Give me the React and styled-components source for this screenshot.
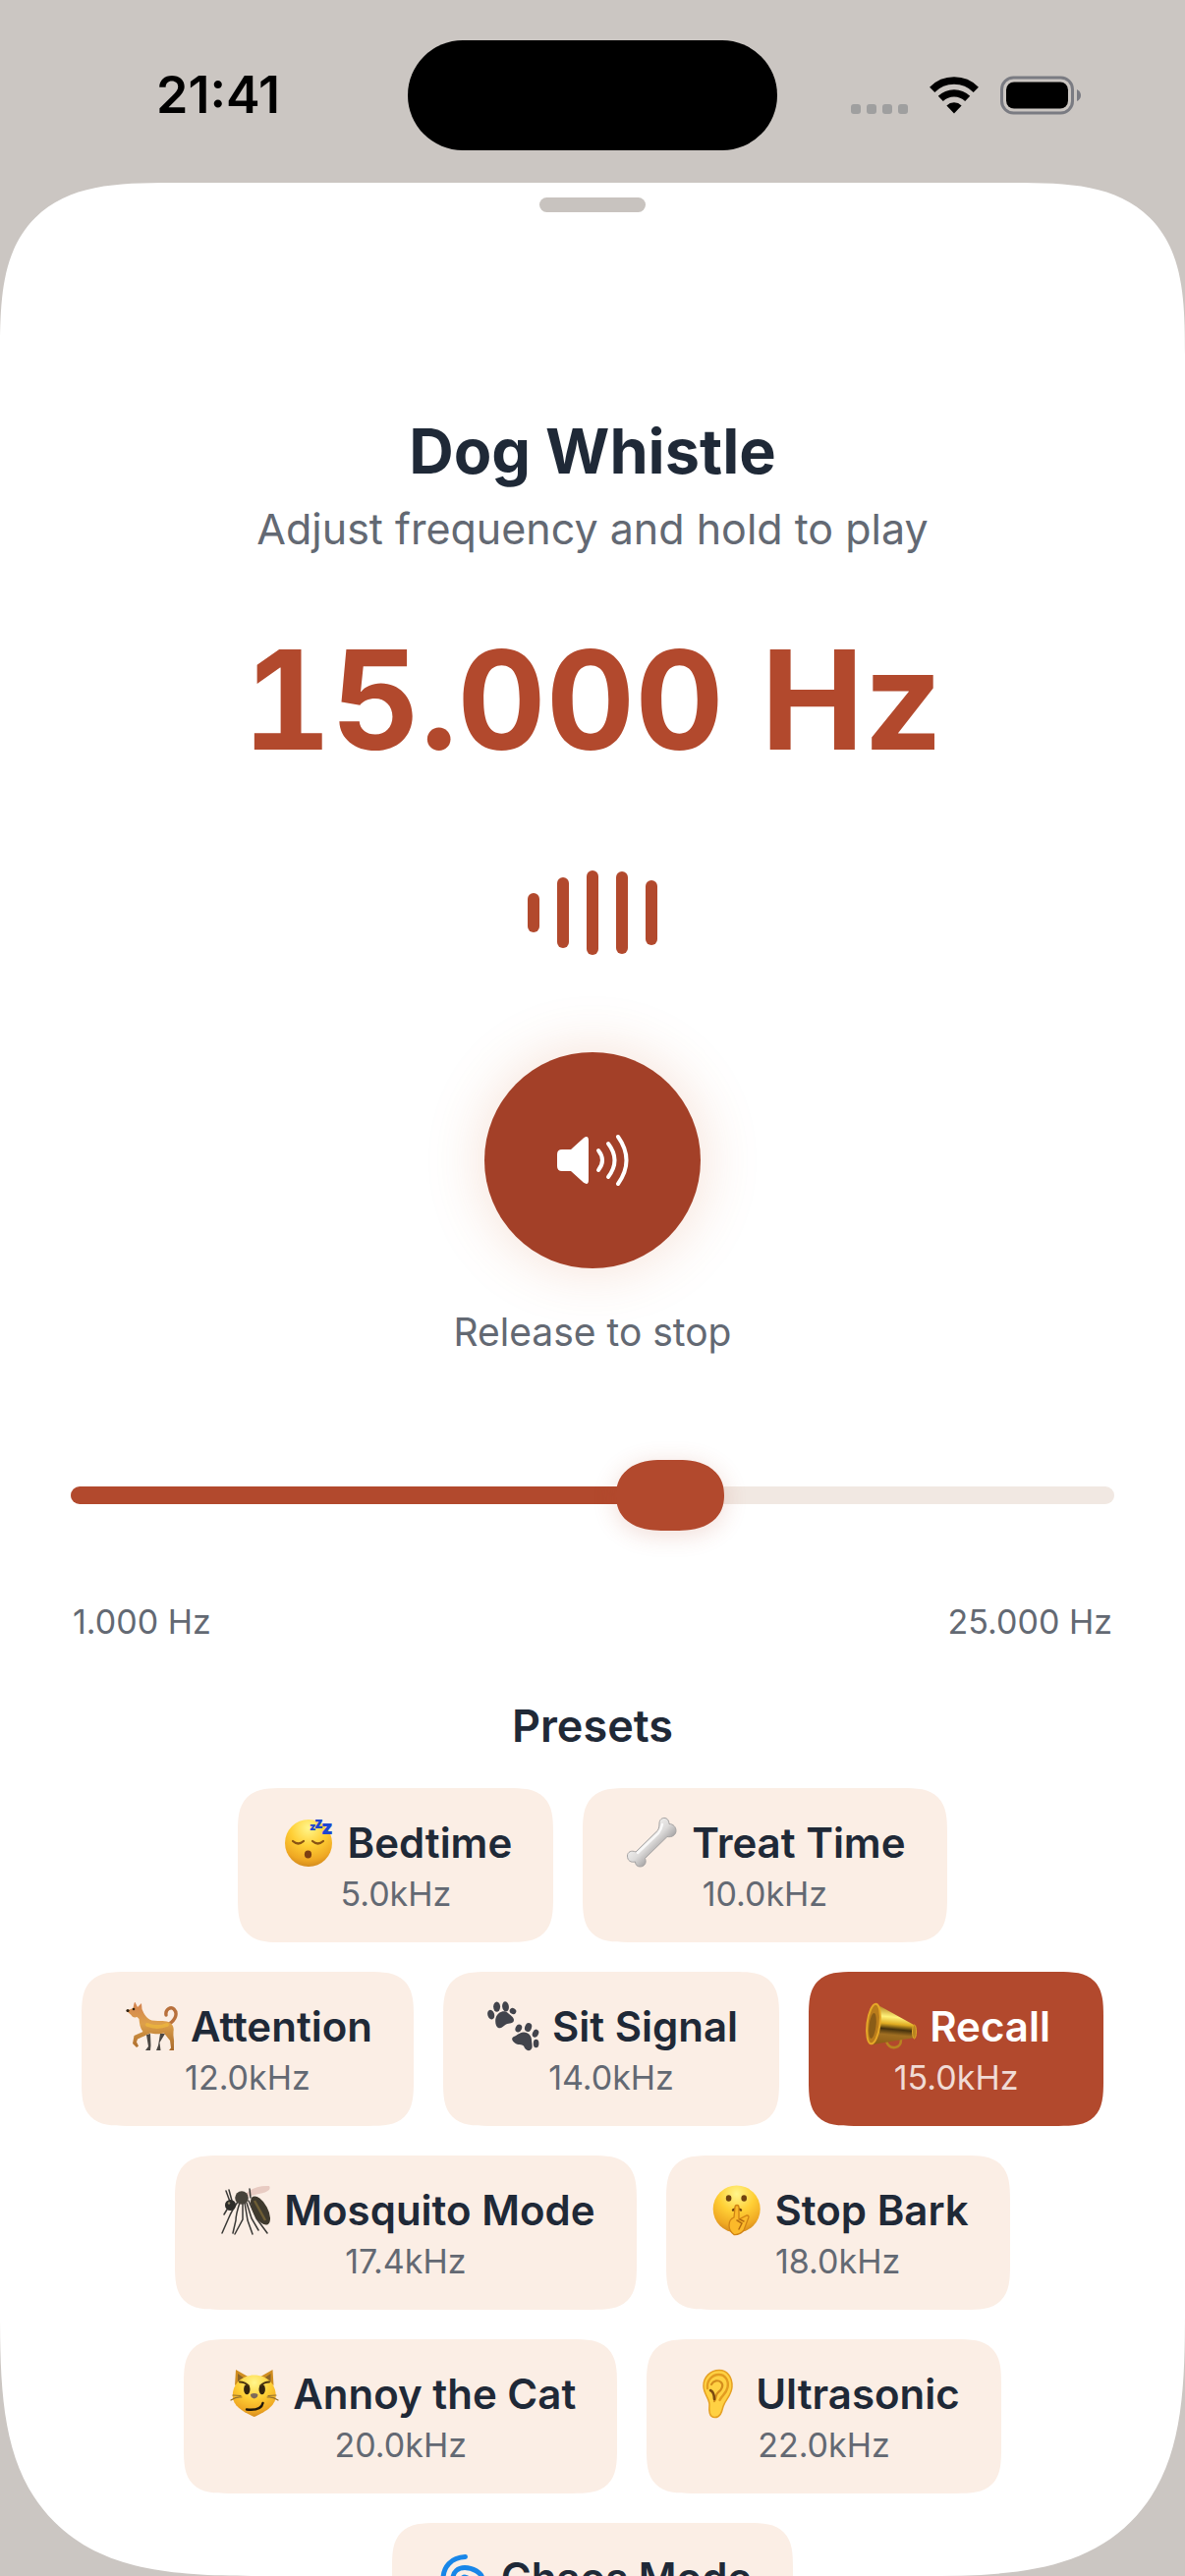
import React, { useState } from 'react';
import styled, { createGlobalStyle } from 'styled-components';

const PRESETS = [
  { name: 'Bedtime', hz: 5000, icon: SleepingIcon },
  { name: 'Treat Time', hz: 10000, icon: BoneIcon },
  { name: 'Attention', hz: 12000, icon: DogIcon },
  { name: 'Sit Signal', hz: 14000, icon: PawsIcon },
  { name: 'Recall', hz: 15000, icon: MegaphoneIcon },
  { name: 'Mosquito Mode', hz: 17400, icon: MosquitoIcon },
  { name: 'Stop Bark', hz: 18000, icon: ShushIcon },
  { name: 'Annoy the Cat', hz: 20000, icon: CatIcon },
  { name: 'Ultrasonic', hz: 22000, icon: EarIcon },
  { name: 'Chaos Mode', hz: 25000, icon: CycloneIcon },
];

const MIN_HZ = 1000;
const MAX_HZ = 25000;
const WAVE = [40, 72, 86, 84, 66];

const formatHz = (hz) => `${Math.floor(hz / 1000)}.${String(hz % 1000).padStart(3, '0')} Hz`;

function App() {
  const [hz, setHz] = useState(15000);
  const fill = ((hz - MIN_HZ) / (MAX_HZ - MIN_HZ)) * 100;

  return (
    <Screen>
      <GlobalStyle />
      <StatusBar>
        <Clock>21:41</Clock>
        <Island />
        <StatusIcons />
      </StatusBar>
      <Sheet>
        <Handle />
        <Title>Dog Whistle</Title>
        <Subtitle>Adjust frequency and hold to play</Subtitle>
        <Frequency>{formatHz(hz)}</Frequency>
        <Wave>
          {WAVE.map((height, i) => (
            <WaveBar key={i} style={{ height }} />
          ))}
        </Wave>
        <PlayButton type="button" aria-label="Play">
          <SpeakerIcon />
        </PlayButton>
        <Hint>Release to stop</Hint>
        <Slider
          type="range"
          aria-label="Frequency"
          min={MIN_HZ}
          max={MAX_HZ}
          step={100}
          value={hz}
          onChange={(e) => setHz(Number(e.target.value))}
          style={{ '--fill': `${fill}%` }}
        />
        <Range>
          <span>{formatHz(MIN_HZ)}</span>
          <span>{formatHz(MAX_HZ)}</span>
        </Range>
        <PresetsTitle>Presets</PresetsTitle>
        <PresetList>
          {PRESETS.map(({ name, hz: value, icon: Icon }) => (
            <Preset key={name} type="button" $active={value === hz} onClick={() => setHz(value)}>
              <PresetName>
                <Icon />
                {name}
              </PresetName>
              <PresetHz $active={value === hz}>{(value / 1000).toFixed(1)}kHz</PresetHz>
            </Preset>
          ))}
        </PresetList>
      </Sheet>
    </Screen>
  );
}

export default App;

function StatusIcons() {
  return (
    <StatusGroup>
      <svg width="58" height="38" viewBox="0 0 58 38" fill="#9f9f9f">
        <rect x="0" y="28" width="10" height="10" rx="3" />
        <rect x="16" y="28" width="10" height="10" rx="3" />
        <rect x="32" y="28" width="10" height="10" rx="3" />
        <rect x="48" y="28" width="10" height="10" rx="3" />
      </svg>
      <svg width="50" height="38" viewBox="0 0 50 38">
        <path d="M2.7 13.3a31.5 31.5 0 0 1 44.6 0" fill="none" stroke="#000" strokeWidth="7.4" />
        <path d="M11.3 22.4a19.5 19.5 0 0 1 27.4 0" fill="none" stroke="#000" strokeWidth="7.2" />
        <path d="M17.4 29.4a11 11 0 0 1 15.2 0L25 37.5z" />
      </svg>
      <svg width="82" height="40" viewBox="0 0 82 40">
        <rect x="1.5" y="2" width="72" height="36" rx="12" fill="none" stroke="#7a7b82" strokeWidth="3" />
        <rect x="6" y="6.5" width="63" height="27" rx="8" />
        <path d="M78 14q4 2 4 6t-4 6z" fill="#7a7b82" />
      </svg>
    </StatusGroup>
  );
}

function SpeakerIcon() {
  return (
    <svg width="74" height="54" viewBox="0 0 74 54" aria-hidden="true">
      <path
        d="M6 16h9L28 4.200Q33 1 33 7v40q0 6-5 2.800L15 38H6q-5 0-5-5V21q0-5 5-5z"
        fill="#fff"
      />
      <g fill="none" stroke="#fff" strokeWidth="4" strokeLinecap="round">
        <path d="M43 17q8 10 0 20" />
        <path d="M53 10q13 17 0 34" />
        <path d="M63 3q17 24 0 48" />
      </g>
    </svg>
  );
}

function Emoji({ children }) {
  return (
    <svg width="56" height="56" viewBox="0 0 56 56" aria-hidden="true">
      {children}
    </svg>
  );
}

function FaceGradient({ id }) {
  return (
    <radialGradient id={id} cx="50%" cy="18%" r="85%">
      <stop offset="0" stopColor="#fff68c" />
      <stop offset="0.45" stopColor="#ffcf35" />
      <stop offset="0.8" stopColor="#efa823" />
      <stop offset="1" stopColor="#cf851c" />
    </radialGradient>
  );
}

function SleepingIcon() {
  return (
    <Emoji>
      <FaceGradient id="sleep" />
      <circle cx="30" cy="28" r="24" fill="url(#sleep)" />
      <path
        d="M14 26q5.500 5 11 0M34 26q5.500 5 11 0"
        fill="none"
        stroke="#8a5413"
        strokeWidth="2.2"
        strokeLinecap="round"
      />
      <ellipse cx="29.5" cy="39.5" rx="3.6" ry="4" fill="#7c3f12" />
      <g fill="#1d47cf" fontFamily="Inter, sans-serif" fontWeight="900">
        <text x="31" y="15" fontSize="11">z</text>
        <text x="36" y="13" fontSize="15">z</text>
        <text x="43" y="19" fontSize="20">z</text>
      </g>
    </Emoji>
  );
}

function BoneIcon() {
  return (
    <Emoji>
      <linearGradient id="bone" x1="0.3" y1="0.3" x2="0.7" y2="0.7">
        <stop offset="0" stopColor="#f4f3f2" />
        <stop offset="0.5" stopColor="#dcdad9" />
        <stop offset="1" stopColor="#9c9a9b" />
      </linearGradient>
      <path
        d="M36 8c0-4 3-6 6-5.500s4 4 4 6c4 0 7 3 7 7s-4 7-9 6L21.500 43.500c2 5-1 8.500-5 8.500-3 0-5-2-5-5-4.500 1-8-1-8-6 0-4 4-6 8.500-4L34.500 15c1-2 1.500-4 1.500-7z"
        fill="url(#bone)"
        stroke="#a5a3a3"
        strokeWidth="1"
      />
      <path d="M39 9q-1 5-4 9L14 38" fill="none" stroke="#fff" strokeWidth="2.5" strokeLinecap="round" opacity="0.8" />
    </Emoji>
  );
}

function DogIcon() {
  return (
    <Emoji>
      <linearGradient id="dog" x1="0" y1="0" x2="0" y2="1">
        <stop offset="0" stopColor="#d38250" />
        <stop offset="0.45" stopColor="#dda04a" />
        <stop offset="1" stopColor="#a8682a" />
      </linearGradient>
      <path d="M44 16c-1-6 5-9 8-6 4 4 2 11-5 15" fill="none" stroke="#b8703c" strokeWidth="3.4" strokeLinecap="round" />
      <path d="M24 36l4-1 .5 12-.5 5h-5l3-4zM38 35h5l-5.500 9 1 8H34l2-5z" fill="#4b4744" />
      <path
        d="M12.500 3l2.500 5 4-4 .5 6c2 5 5 10 10 11.500 6 1 12-.5 17 1.500 4 1.500 6 6 5 10-.5 5 1 8 .5 12v7h-5l2-2.500-1-7.500-6-7.500c-4 1-10 1-14 0-3 1-8 4-13 6l-1 3 2 4-2 1.500-4-4 1.500-8 9-4c-3-4-3.500-8-4-13l-2-2c-3 1-5 0-6-2l-4-3.500 1-1.500 5-2c.5-3 1-5 1.500-6z"
        fill="url(#dog)"
      />
      <circle cx="11" cy="10" r="1.3" fill="#30210f" />
      <circle cx="5" cy="11.5" r="1.6" fill="#30210f" />
      <path d="M25 26q10 4 20 0" fill="none" stroke="#f0b93c" strokeWidth="4" strokeLinecap="round" opacity="0.7" />
    </Emoji>
  );
}

function PawsIcon() {
  return (
    <Emoji>
      <g fill="#42444c">
        <ellipse cx="6.7" cy="15.6" rx="3.4" ry="4.9" transform="rotate(-18 6.7 15.6)" />
        <ellipse cx="12.6" cy="7.6" rx="3.5" ry="5.2" />
        <ellipse cx="21.5" cy="7.4" rx="3.4" ry="5.1" transform="rotate(-8 21.5 7.4)" />
        <ellipse cx="29" cy="12" rx="3.4" ry="3" transform="rotate(30 29 12)" />
        <path d="M13 16c3-4 8-5 11-2 2 2 6 4 6 7 0 4-5 3-8 4.500s-5 5-8 3.500-4-9-1-13z" />
        <ellipse cx="34.8" cy="29.5" rx="3.2" ry="4" transform="rotate(25 34.8 29.5)" />
        <ellipse cx="44.6" cy="28.5" rx="3.4" ry="4.6" transform="rotate(20 44.6 28.5)" />
        <ellipse cx="52" cy="34.7" rx="3" ry="4.2" transform="rotate(25 52 34.7)" />
        <ellipse cx="52.6" cy="45" rx="2.8" ry="4.2" />
        <path d="M30 38c3-1 5-4 10-4.500 5 0 8 4 8 8 0 3 2 8-1 10s-6-1-7-4c-2-2-6-.5-9-3s-4-5-1-6.500z" />
      </g>
    </Emoji>
  );
}

function MegaphoneIcon() {
  return (
    <Emoji>
      <linearGradient id="horn" x1="0.1" y1="0" x2="0" y2="1">
        <stop offset="0" stopColor="#b07a18" />
        <stop offset="0.28" stopColor="#fff27a" />
        <stop offset="0.45" stopColor="#e0ac22" />
        <stop offset="0.58" stopColor="#45310c" />
        <stop offset="0.72" stopColor="#a06f22" />
        <stop offset="1" stopColor="#8a5a14" />
      </linearGradient>
      <path d="M25 43q3 7 9 6t6-8" fill="none" stroke="#b98420" strokeWidth="2.5" />
      <path d="M15 5l38 21q4 6 1 13L11 46z" fill="url(#horn)" />
      <ellipse cx="12" cy="25" rx="6.5" ry="20.5" transform="rotate(7 12 25)" fill="#b97b1b" stroke="#e6a828" strokeWidth="2" />
      <ellipse cx="11" cy="27" rx="3.5" ry="13" transform="rotate(7 11 27)" fill="#8a5c17" />
      <ellipse cx="53.5" cy="33" rx="2" ry="7" fill="#b8841f" stroke="#e1a62a" strokeWidth="1" />
    </Emoji>
  );
}

function MosquitoIcon() {
  return (
    <Emoji>
      <path d="M29 12Q38 2 54 3q3 5-8 7.500T31 14z" fill="#e8cbc2" />
      <g fill="none" stroke="#3a3936" strokeWidth="1.5" strokeLinecap="round">
        <path d="M22 19q-6 9-9 16l-7 16M24 20q-4 12-4 18l-3 13M27 21v16l-8 15M29 20l3 18 5 14M31 20l5 16 7 12M33 18l8 18 11 15" />
        <path d="M14 19l-4-11M16 18l-3-11M11 27l-3 5M35 15l-1-9" />
      </g>
      <ellipse cx="45" cy="28" rx="7.5" ry="16" transform="rotate(-28 45 28)" fill="#3f3a2e" />
      <path d="M39 18l11 20" stroke="#6d5d35" strokeWidth="2.5" />
      <circle cx="26" cy="15" r="6.8" fill="#46423a" />
      <circle cx="14.5" cy="22.5" r="5.5" fill="#2d2c29" />
      <circle cx="13" cy="20.5" r="1.2" fill="#8c8468" />
    </Emoji>
  );
}

function ShushIcon() {
  return (
    <Emoji>
      <FaceGradient id="shush" />
      <circle cx="29.7" cy="26.5" r="24" fill="url(#shush)" />
      <ellipse cx="21.6" cy="15.5" rx="2.8" ry="3.2" fill="#70430f" />
      <ellipse cx="37.2" cy="15.5" rx="2.8" ry="3.2" fill="#70430f" />
      <path d="M26 27.500q4-3 8 0" fill="none" stroke="#70430f" strokeWidth="2.4" strokeLinecap="round" />
      <path
        d="M28 25q0-2.500 2-2.500t2 2.500v12l8-4q3 0 1.500 3L37 48q-4 5-10 4.500-5-3.500-5-9.500 0-6 5-8z"
        fill="#fbb92a"
        stroke="#d08314"
        strokeWidth="1.3"
      />
      <path d="M30 38l5 3-3 6M33 37l4 2" fill="none" stroke="#b56c10" strokeWidth="1.5" strokeLinecap="round" />
    </Emoji>
  );
}

function CatIcon() {
  return (
    <Emoji>
      <FaceGradient id="cat" />
      <path d="M11 3l14 8L10 19zM48.500 3l-14 8 15 8z" fill="#cf8d20" />
      <path d="M13 7l7 5-7 5zM46.500 7l-7 5 7 5z" fill="#8a6428" />
      <path d="M29.700 8.500c13 0 22 9 22 21 0 11-12 17-22 21.500-10-4.500-22-10.500-22-21.500 0-12 9-21 22-21z" fill="url(#cat)" />
      <ellipse cx="22.3" cy="23" rx="3.2" ry="5.3" fill="#33240e" />
      <ellipse cx="37.7" cy="23" rx="3.2" ry="5.3" fill="#33240e" />
      <g fill="none" stroke="#4a3310" strokeLinecap="round">
        <path d="M15 15.500q5 0 8.500 3.500M45 15.500q-5 0-8.500 3.500" strokeWidth="2" />
        <path d="M22 43.500q15 1.500 16.500-6.500" stroke="#21180b" strokeWidth="2.4" />
        <path d="M6 34q6-4 11-3M54 34q-6-4-11-3M8 29l8 .5M52 29l-8 .5" stroke="#93702f" strokeWidth="1.2" />
      </g>
      <path d="M26 28q3.700-2 7.400 0 .3 3.500-3.700 4.500-4-1-3.700-4.500z" fill="#7d6a5a" />
    </Emoji>
  );
}

function EarIcon() {
  return (
    <Emoji>
      <path
        d="M32 3.500c8 0 13.500 7 13 17-.5 9-7 13-9 20-1.500 6-3 11-8.500 11-6 0-6-7-5.500-13 0-6-6-11-6-19 0-9 7-16 16-16z"
        fill="#ffd143"
        stroke="#e5a023"
        strokeWidth="1.5"
      />
      <path d="M20 22c-1-8 5-14 11.500-14S42 14 40.500 21s-6 8-8 13" fill="none" stroke="#e39c20" strokeWidth="2.4" strokeLinecap="round" />
      <path d="M24 18c2-4 7-5 10-2s0 8-3 10-2 6-4 9" fill="none" stroke="#d38d1c" strokeWidth="2.2" strokeLinecap="round" />
      <path d="M23 24q4 2 4 9" fill="none" stroke="#7b4a10" strokeWidth="2.6" strokeLinecap="round" />
    </Emoji>
  );
}

function CycloneIcon() {
  return (
    <Emoji>
      <g fill="none" stroke="#1886e8" strokeWidth="5" strokeLinecap="round">
        <path d="M32.500 6.500C18 7 10 17 10 29c0 9 7 17 17 19" />
        <path d="M20 28c0-6 5-10.500 12-10.500S50 22 50 30c0 12-9 20-22 20" />
        <path d="M29 30c0-4 7-4 7 1 0 6-9 8-13 2" />
      </g>
    </Emoji>
  );
}

const GlobalStyle = createGlobalStyle`
  * {
    box-sizing: border-box;
  }

  body {
    margin: 0;
    background: #cbc6c2;
    color: #1f2937;
    font-family: Inter, 'Liberation Sans', sans-serif;
  }

  button {
    font: inherit;
    color: inherit;
    border: 0;
    cursor: pointer;
  }
`;

const Screen = styled.div`
  display: flex;
  flex-direction: column;
  height: 100vh;
  overflow: hidden;
`;

const StatusBar = styled.header`
  display: grid;
  grid-template-columns: 1fr auto 1fr;
  align-items: center;
  flex: none;
  padding: 41px 106px 33px;
`;

const Clock = styled.time`
  padding-left: 53px;
  color: #000;
  font-size: 52px;
  font-weight: 600;
  line-height: 60px;
`;

const Island = styled.div`
  width: 376px;
  height: 112px;
  border-radius: 56px;
  background: #000;
`;

const StatusGroup = styled.div`
  display: flex;
  align-items: center;
  justify-content: flex-end;
  gap: 22px;
`;

const Sheet = styled.main`
  display: flex;
  flex-direction: column;
  align-items: center;
  flex: 1;
  min-height: 0;
  padding: 15px 72px 0;
  overflow: hidden;
  background: #fff;
  border-radius: 120px 120px 180px 180px;

  @supports (corner-shape: squircle) {
    border-radius: 175px 175px 270px 270px;
    corner-shape: superellipse(1.6);
  }
`;

const Handle = styled.div`
  flex: none;
  width: 108px;
  height: 15px;
  border-radius: 8px;
  background: #c8c3bf;
`;

const Title = styled.h1`
  margin: 204px 0 12px;
  font-size: 63px;
  font-weight: 700;
  line-height: 78px;
`;

const Subtitle = styled.p`
  margin: 0;
  color: #636973;
  font-size: 43px;
  line-height: 56px;
`;

const Frequency = styled.output`
  margin-top: 66px;
  color: #b2492d;
  font-size: 140px;
  font-weight: 700;
  line-height: 160px;
  font-variant-numeric: tabular-nums;
`;

const Wave = styled.div`
  display: flex;
  align-items: center;
  flex: none;
  gap: 18px;
  height: 120px;
  margin: 77px 0 82px;
`;

const WaveBar = styled.span`
  width: 12px;
  border-radius: 6px;
  background: #b2492d;
`;

const PlayButton = styled.button`
  display: flex;
  align-items: center;
  justify-content: center;
  flex: none;
  width: 220px;
  height: 220px;
  border-radius: 50%;
  background: #a34028;
  box-shadow: 0 0 60px rgba(210, 110, 60, 0.22);
`;

const Hint = styled.p`
  margin: 39px 0 104px;
  color: #636973;
  font-size: 39px;
  line-height: 52px;
`;

const Slider = styled.input`
  flex: none;
  width: 100%;
  height: 72px;
  margin: 0;
  appearance: none;
  background: transparent;

  &::-webkit-slider-runnable-track {
    height: 18px;
    border-radius: 9px;
    background: linear-gradient(to right, #b2492d var(--fill), #f1e8e2 var(--fill));
  }

  &::-webkit-slider-thumb {
    appearance: none;
    width: 110px;
    height: 72px;
    margin-top: -27px;
    border-radius: 36px;
    background: #b2492d;
    box-shadow: 0 4px 24px rgba(178, 73, 45, 0.2);
  }

  @supports (corner-shape: squircle) {
    &::-webkit-slider-thumb {
      border-radius: 46px / 36px;
      corner-shape: superellipse(1.2);
    }
  }
`;

const Range = styled.div`
  display: flex;
  justify-content: space-between;
  align-self: stretch;
  margin: 73px 0 58px;
  padding: 0 2px;
  color: #636973;
  font-size: 34px;
  line-height: 40px;
`;

const PresetsTitle = styled.h2`
  margin: 0 0 35px;
  font-size: 45px;
  font-weight: 600;
  line-height: 56px;
`;

const PresetList = styled.div`
  display: flex;
  flex-wrap: wrap;
  justify-content: center;
  gap: 30px;
`;

const Preset = styled.button`
  display: flex;
  flex-direction: column;
  align-items: center;
  gap: 4px;
  min-width: 300px;
  padding: 28px 42px 29px;
  border-radius: 32px;
  background: ${({ $active }) => ($active ? '#b2492d' : '#fbeee5')};
  color: ${({ $active }) => ($active ? '#fff' : '#1f2937')};

  @supports (corner-shape: squircle) {
    border-radius: 46px;
    corner-shape: superellipse(1.6);
  }
`;

const PresetName = styled.span`
  display: flex;
  align-items: center;
  gap: 13px;
  font-size: 42px;
  font-weight: 600;
  line-height: 56px;
`;

const PresetHz = styled.span`
  color: ${({ $active }) => ($active ? '#f0dbd5' : '#636973')};
  font-size: 34px;
  line-height: 40px;
`;
